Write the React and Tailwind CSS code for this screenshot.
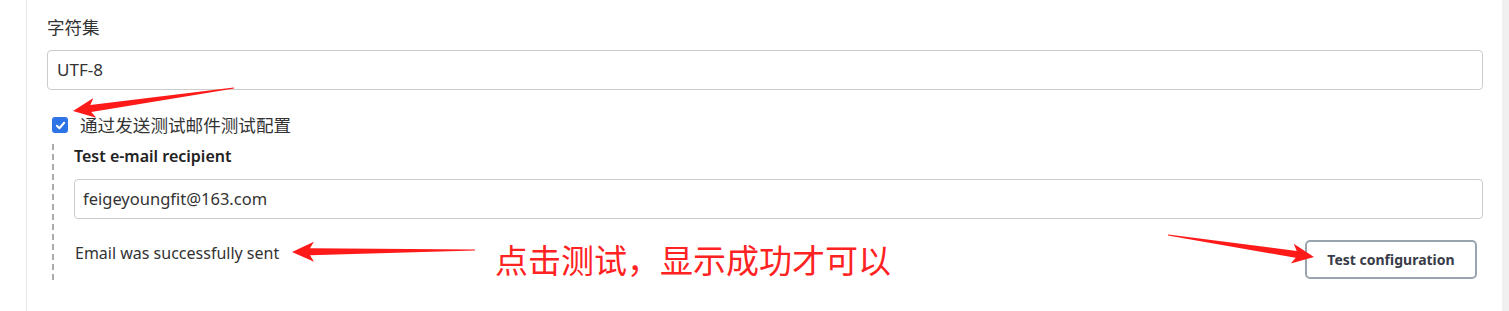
import React from 'react'

const font = { fontFamily: '"Noto Sans", "Noto Sans CJK SC", sans-serif' }

// red annotation arrow polygon from tail to tip
const arrowPoints = (tail, tip, headLen, headW, shaftW) => {
  const dx = tip[0] - tail[0]
  const dy = tip[1] - tail[1]
  const len = Math.hypot(dx, dy)
  const ux = dx / len
  const uy = dy / len
  const nx = -uy
  const ny = ux
  const p = (x, y) => `${x.toFixed(1)},${y.toFixed(1)}`
  const sx = tip[0] - ux * headLen
  const sy = tip[1] - uy * headLen
  const bx = tip[0] - ux * (headLen + 4)
  const by = tip[1] - uy * (headLen + 4)
  return [
    p(tail[0] + nx * 0.6, tail[1] + ny * 0.6),
    p(sx + nx * shaftW / 2, sy + ny * shaftW / 2),
    p(bx + nx * headW / 2, by + ny * headW / 2),
    p(tip[0], tip[1]),
    p(bx - nx * headW / 2, by - ny * headW / 2),
    p(sx - nx * shaftW / 2, sy - ny * shaftW / 2),
    p(tail[0] - nx * 0.6, tail[1] - ny * 0.6),
  ].join(' ')
}

const Arrow = ({ tail, tip, headLen = 18, headW = 20, shaftW = 7 }) => (
  <polygon points={arrowPoints(tail, tip, headLen, headW, shaftW)} fill="#ff1a1a" />
)

const App = () => {
  return (
    <div className="relative flex h-[311px] w-[1509px] overflow-hidden bg-white text-[#333]" style={font}>
      <div className="w-[27px] shrink-0 border-r border-[#e8e8e8] bg-white"></div>
      <div className="flex-1 pl-[20px] pr-[19px] pt-[15px]">
        <div className="text-[17.5px] leading-[24px] text-[#333]">字符集</div>
        <div className="mt-[11px] flex h-[40px] items-center rounded-[4px] border border-[#cccccc] px-[9px] text-[17px]">
          UTF-8
        </div>
        <label className="mt-[23px] flex items-center pl-[5px]">
          <span className="flex h-[16px] w-[16px] items-center justify-center rounded-[3px] bg-[#2f74e6]">
            <svg width="11" height="11" viewBox="0 0 12 12">
              <path d="M2 6.3 L4.8 9 L10 3" fill="none" stroke="white" strokeWidth="2.2" strokeLinecap="round" strokeLinejoin="round" />
            </svg>
          </span>
          <span className="ml-[12px] text-[17.6px] leading-[24px]">通过发送测试邮件测试配置</span>
        </label>
        <div className="ml-[5px] mt-[7px] border-l-2 border-dashed border-[#ababab] pl-[20px] pb-[1px]">
          <div className="text-[16px] font-semibold leading-[24px] text-[#222]">Test e-mail recipient</div>
          <div className="mt-[11px] flex h-[40px] items-center rounded-[4px] border border-[#cccccc] px-[8px] text-[16.5px]">
            feigeyoungfit@163.com
          </div>
          <div className="mt-[21px] flex items-start justify-between">
            <div className="pl-[1px] pt-[1px] text-[16px] leading-[24px] text-[#333]">Email was successfully sent</div>
            <button className="mr-[6px] h-[39px] w-[172px] rounded-[5px] border-2 border-[#9aa4ae] bg-white text-[14px] font-bold text-[#383c48]">
              Test configuration
            </button>
          </div>
        </div>
      </div>
      <div className="w-[7px] shrink-0 bg-[#f0f0f0]"></div>

      <div
        className="absolute left-[495px] top-[240px] text-[33px] leading-[38px] text-[#ff2222]"
        style={{ fontFamily: '"Noto Sans CJK SC", sans-serif' }}
      >
        点击测试，显示成功才可以
      </div>
      <svg className="pointer-events-none absolute left-0 top-0" width="1509" height="311">
        <Arrow tail={[234, 88]} tip={[73, 111]} />
        <Arrow tail={[475, 250]} tip={[292, 252]} />
        <Arrow tail={[1168, 235]} tip={[1314, 257]} />
      </svg>
    </div>
  )
}

export default App
